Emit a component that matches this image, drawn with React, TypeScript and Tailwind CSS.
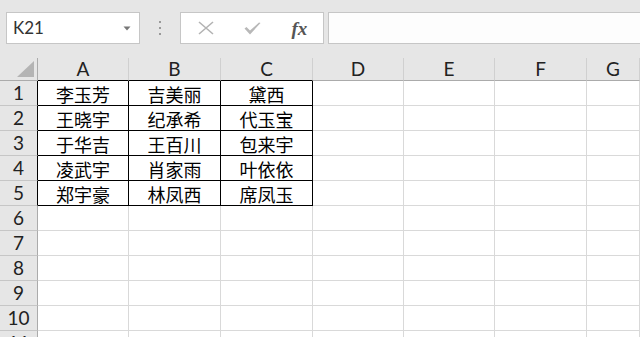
import React from "react";

const cols = ["A", "B", "C", "D", "E", "F", "G"];
const colW = ["w-[91px]", "w-[92px]", "w-[92px]", "w-[91px]", "w-[91px]", "w-[92px]", "flex-1"];
const data = [
  ["李玉芳", "吉美丽", "黛西"],
  ["王晓宇", "纪承希", "代玉宝"],
  ["于华吉", "王百川", "包来宇"],
  ["凌武宇", "肖家雨", "叶依依"],
  ["郑宇豪", "林凤西", "席凤玉"],
];
const rows = [1, 2, 3, 4, 5, 6, 7, 8, 9, 10, 11];

const latin = { fontFamily: "Lato, 'Liberation Sans', sans-serif" };
const cjk = { fontFamily: "'Noto Sans CJK SC', 'Noto Sans', sans-serif" };

export default function App() {
  return (
    <div className="w-[640px] h-[337px] overflow-hidden bg-white flex flex-col">
      {/* Formula bar */}
      <div className="h-[58px] shrink-0 bg-[#e6e6e6] flex items-start pt-[12px] pl-[6px]">
        <div className="w-[134px] h-[32px] bg-white border border-[#c6c6c6] flex items-center pl-[6px] pr-[8px]">
          <span className="flex-1 text-[17px] text-[#333]" style={latin}>K21</span>
          <svg width="8" height="5" viewBox="0 0 8 5">
            <path d="M0.5 0.5 L7.5 0.5 L4 4.5 Z" fill="#777" />
          </svg>
        </div>
        <div className="w-[40px] h-[32px] flex flex-col items-center justify-center gap-[4px]">
          <div className="w-[2px] h-[2px] bg-[#999]" />
          <div className="w-[2px] h-[2px] bg-[#999]" />
          <div className="w-[2px] h-[2px] bg-[#999]" />
        </div>
        <div className="w-[144px] h-[32px] bg-white border border-[#c6c6c6] flex items-center">
          <div className="w-[48px] flex justify-center pl-[2px]">
            <svg width="16" height="14" viewBox="0 0 16 14">
              <path d="M1 1 L15 13 M15 1 L1 13" stroke="#b3b3b3" strokeWidth="1.6" fill="none" />
            </svg>
          </div>
          <div className="w-[48px] flex justify-center">
            <svg width="17" height="13" viewBox="0 0 17 13">
              <path d="M0.5 6.5 L6 12.5 L16.5 1 L15 0.5 L6 8.5 L2.5 5 Z" fill="#b8b8b8" />
            </svg>
          </div>
          <div className="w-[48px] flex justify-center">
            <span
              className="text-[19px] italic font-bold text-[#555] leading-none"
              style={{ fontFamily: "'Liberation Serif', 'DejaVu Serif', serif" }}
            >
              fx
            </span>
          </div>
        </div>
        <div className="flex-1 ml-[4px] h-[32px] bg-[#fdfdfd] border border-[#c6c6c6] border-r-0" />
      </div>

      {/* Sheet */}
      <div className="flex-1 flex flex-col">
        {/* Column headers */}
        <div className="h-[23px] shrink-0 flex bg-[#e6e6e6]">
          <div className="w-[38px] h-full border-r border-b border-[#ababab] relative">
            <svg className="absolute right-[3px] bottom-[3px]" width="17" height="16" viewBox="0 0 17 16">
              <path d="M17 0 L17 16 L0 16 Z" fill="#b4b4b4" />
            </svg>
          </div>
          {cols.map((c, i) => (
            <div
              key={c}
              className={`${colW[i]} h-full border-r border-r-[#d0d0d0] border-b ${
                i < 3 ? "border-b-black" : "border-b-[#ababab]"
              } flex items-end justify-center text-[19px] leading-[22px] text-[#222]`}
              style={latin}
            >
              {c}
            </div>
          ))}
        </div>
        {rows.map((r) => {
          const inTable = r <= 5;
          return (
            <div key={r} className="h-[25px] shrink-0 flex">
              <div
                className={`w-[38px] h-full bg-[#e6e6e6] border-b border-b-[#c6c6c6] border-r ${
                  inTable ? "border-r-black" : "border-r-[#ababab]"
                } flex items-center justify-center text-[19px] text-[#222]`}
                style={latin}
              >
                {r}
              </div>
              {cols.map((c, i) => {
                const black = inTable && i < 3;
                return (
                  <div
                    key={c}
                    className={`${colW[i]} h-full border-r border-b ${
                      black ? "border-black" : "border-[#d9d9d9]"
                    } flex items-center justify-center pt-[2px] text-[18px] text-black`}
                    style={cjk}
                  >
                    {black ? data[r - 1][i] : ""}
                  </div>
                );
              })}
            </div>
          );
        })}
      </div>
    </div>
  );
}
